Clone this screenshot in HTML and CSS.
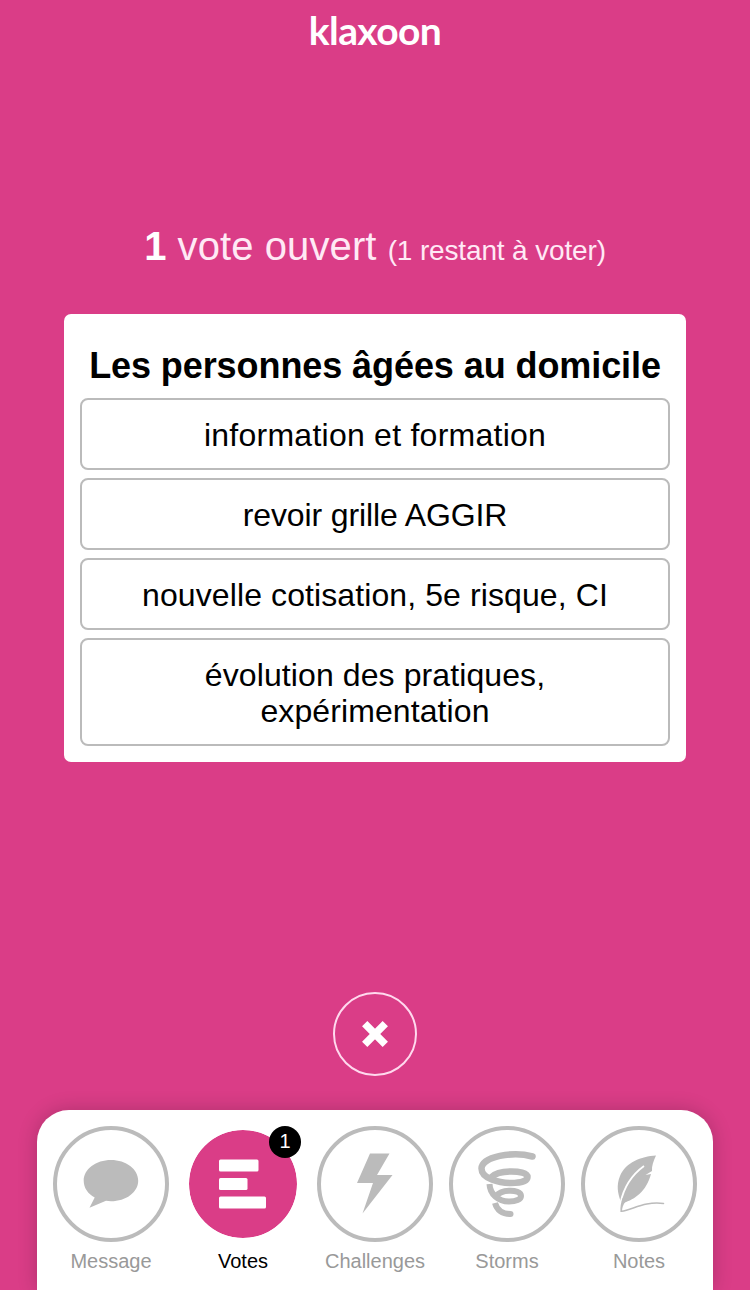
FILE: index.html
```html
<!DOCTYPE html>
<html lang="fr">
<head>
  <meta charset="UTF-8" />
  <title>Klaxoon - Votes</title>
  <link rel="stylesheet" href="styles.css">
</head>
<body>
  <header class="logo"><span>klaxoon</span></header>

  <main>
    <h1><b>1</b> <span class="open">vote ouvert</span> <small>(1 restant à voter)</small></h1>

    <section class="card">
      <h2>Les personnes âgées au domicile</h2>
      <div class="choices">
        <button class="choice">information et formation</button>
        <button class="choice tight">revoir grille AGGIR</button>
        <button class="choice medium">nouvelle cotisation, 5e risque, CI</button>
        <button class="choice medium">évolution des pratiques,<br>expérimentation</button>
      </div>
    </section>
  </main>

  <button class="close" aria-label="Fermer">
    <svg width="28" height="28" viewBox="0 0 28 28">
      <path d="M3.700 3.700L24.300 24.300M24.300 3.700L3.700 24.300" stroke="#fff" stroke-width="7.500" fill="none" />
    </svg>
  </button>

  <nav class="dock">
    <a class="tab">
      <span class="circle">
        <svg width="108" height="108" viewBox="0 0 108 108">
          <path fill="#bbb" d="M54 30c15 0 27.200 9.200 27.200 20.700S69 71.200 54 71.200c-1.700 0-3.400-.1-5-.4L32.500 77.800l5.200-10.200c-6.900-3.800-11-10-11-16.900C26.700 39.200 39 30 54 30z" />
        </svg>
      </span>
      <span class="label">Message</span>
    </a>
    <a class="tab active">
      <span class="circle">
        <svg width="108" height="108" viewBox="0 0 108 108" fill="#fff">
          <rect x="30" y="29.500" width="39.500" height="12" rx="1.500" />
          <rect x="30" y="48" width="28.500" height="12" rx="1.500" />
          <rect x="30" y="66.500" width="47" height="12" rx="1.500" />
        </svg>
        <span class="badge">1</span>
      </span>
      <span class="label">Votes</span>
    </a>
    <a class="tab">
      <span class="circle">
        <svg width="108" height="108" viewBox="0 0 108 108">
          <path fill="#bbb" d="M49 23.500H68.500L56 45H71.500L41.500 83.500 52 53H36z" />
        </svg>
      </span>
      <span class="label">Challenges</span>
    </a>
    <a class="tab">
      <span class="circle">
        <svg width="108" height="108" viewBox="0 0 108 108" fill="none" stroke="#bbb" stroke-linecap="round">
          <path stroke-width="6.500" d="M79.500 26.500C60 21 29 26.500 28.500 38.500C28.500 48.500 46 53 58 53C69 53 74.500 50.500 74.500 47C74.500 43 66 41.300 57 41.500C48 41.700 42 43.500 38.500 47" />
          <path stroke-width="6" stroke-linecap="butt" d="M36.500 54C37 64 45 71.500 56 71.500C63 71.500 68 69.500 68 66C68 62 62 60.500 56 60.800C50 61 46 62.500 43 66" />
          <path stroke-width="6" stroke-linecap="butt" d="M42 73C44 80 49 84 57.500 84" />
          <circle cx="57.500" cy="84" r="3" fill="#bbb" stroke="none" />
        </svg>
      </span>
      <span class="label">Storms</span>
    </a>
    <a class="tab">
      <span class="circle">
        <svg width="108" height="108" viewBox="0 0 108 108">
          <path fill="#bbb" d="M71 25.500C56 26.500 41 32 35 46C31 56 33 63 35.500 71L38.500 73C50 69 61 62 66 44L60.500 45L67 41C66.500 36 68.500 31 71 25.500z" />
          <path fill="none" stroke="#fff" stroke-width="1.800" d="M59 36C48 44 39 56 35.500 73" />
          <path fill="#bbb" d="M37.500 68L40.500 71.500C38 75 37 78 37 81.500L35.500 82C35 77 36 73 37.500 68z" />
          <path fill="none" stroke="#bbb" stroke-width="1.500" stroke-linecap="round" d="M36.500 81.300C48 79.500 60 71 78.500 73.500" />
        </svg>
      </span>
      <span class="label">Notes</span>
    </a>
  </nav>
</body>
</html>
```

FILE: styles.css
```css
* {
  box-sizing: border-box;
}
body {
  margin: 0;
  height: 1290px;
  overflow: hidden;
  display: flex;
  flex-direction: column;
  align-items: center;
  background: #da3d87;
  font-family: "Liberation Sans", Arial, sans-serif;
}
.logo {
  height: 66px;
  padding-top: 6px;
  color: #fff;
  font-family: Lato, sans-serif;
  font-weight: bold;
  font-size: 39px;
  line-height: 48px;
  letter-spacing: -0.6px;
}
main {
  width: 622px;
  height: 926px;
  padding-top: 155px;
}
h1 {
  margin: 0;
  height: 93px;
  line-height: 50px;
  font-size: 40px;
  font-weight: normal;
  color: #ffe9f5;
  text-align: center;
  white-space: nowrap;
}
h1 b {
  color: #fff;
}
h1 .open {
  letter-spacing: 0.1px;
}
h1 small {
  font-size: 28px;
  letter-spacing: -0.15px;
}
.card {
  padding: 32px 16px 16px;
  background: #fff;
  border-radius: 7px;
}
h2 {
  margin: 0;
  height: 52px;
  line-height: 40px;
  font-size: 36px;
  letter-spacing: -0.08px;
  text-align: center;
  white-space: nowrap;
}
.choices {
  display: flex;
  flex-direction: column;
  gap: 8px;
}
.choice {
  padding: 17px 16px 15px;
  border: 2px solid #bbb;
  border-radius: 8px;
  background: #fff;
  color: #000;
  font-family: inherit;
  font-size: 32px;
  line-height: 36px;
  letter-spacing: 0.25px;
}
.choice.medium {
  letter-spacing: 0.1px;
}
.choice.tight {
  letter-spacing: -0.12px;
}
.close {
  display: flex;
  align-items: center;
  justify-content: center;
  width: 84px;
  height: 84px;
  padding: 0;
  border: 2px solid #ffd9ee;
  border-radius: 50%;
  background: none;
}
.dock {
  display: flex;
  width: 676px;
  height: 180px;
  margin-top: 34px;
  padding: 16px 8px 0;
  background: #fff;
  border-radius: 32px 32px 0 0;
  box-shadow: 0 0 20px rgba(0, 0, 0, 0.2);
}
.tab {
  display: flex;
  flex-direction: column;
  align-items: center;
  width: 132px;
  color: #999;
}
.circle {
  position: relative;
  width: 116px;
  height: 116px;
  border: 4px solid #bbb;
  border-radius: 50%;
}
.circle svg {
  display: block;
}
.label {
  margin-top: 7px;
  font-size: 20px;
  line-height: 24px;
}
.active {
  color: #000;
}
.active .circle {
  border-color: #fff;
  background: #da3d87;
  background-clip: padding-box;
}
.badge {
  position: absolute;
  top: -4px;
  right: -4px;
  width: 32px;
  height: 32px;
  border-radius: 50%;
  background: #000;
  color: #fff;
  font-size: 20px;
  line-height: 31px;
  text-align: center;
}
```
